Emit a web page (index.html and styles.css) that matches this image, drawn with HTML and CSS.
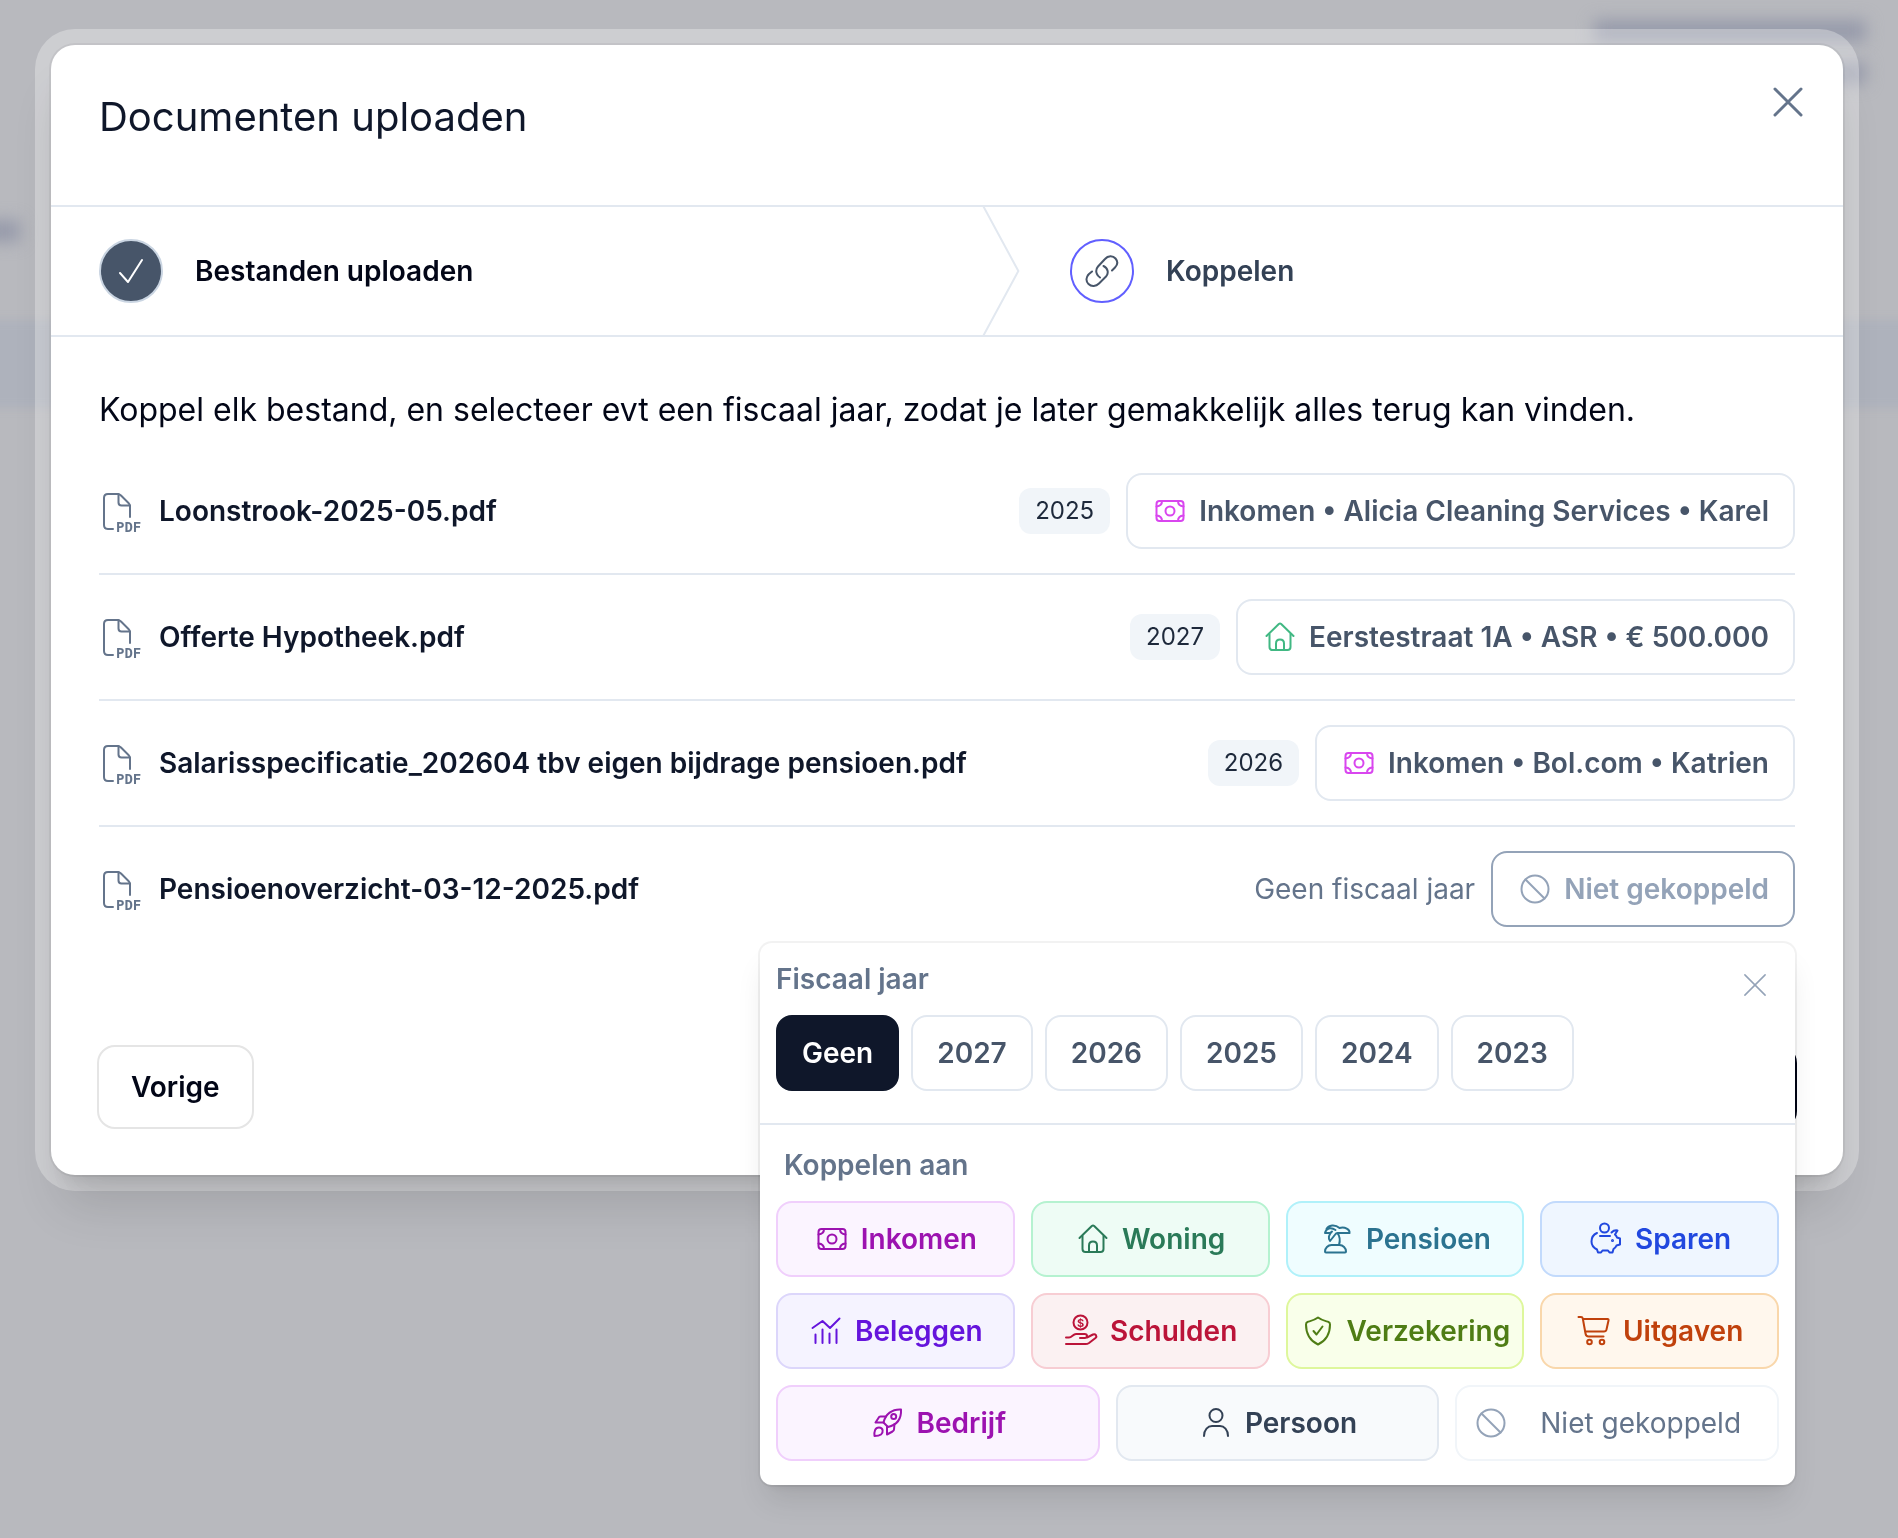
FILE: index.html
```html
<!DOCTYPE html>
<html lang="nl">
<head>
    <meta charset="UTF-8">
    <meta name="viewport" content="width=device-width, initial-scale=1.0">
    <title>Documenten uploaden</title>
    <link rel="stylesheet" href="styles.css">
</head>
<body>
    <svg class="icon-defs" aria-hidden="true">
        <symbol id="icon-close" viewBox="0 0 36 36">
            <path d="M5 5L31 31M31 5L5 31"/>
        </symbol>
        <symbol id="icon-check" viewBox="0 0 36 36">
            <path d="M7 20L15 29L29 7"/>
        </symbol>
        <symbol id="icon-link" viewBox="0 0 36 36">
            <path d="M16 24.500C12 22 11 17 14 13.500L21 6C24 2.500 29 2.500 31.500 5.500C34 8.500 33.500 12 31 14.500L28 17.500"/>
            <path d="M19.500 13C24 15 25 20 22 23.500L15 30.500C12 33.500 7.500 34 4.500 31C1.500 28 2 24 5 21L8 18.500"/>
        </symbol>
        <symbol id="icon-file" viewBox="0 0 44 44">
            <path d="M14 40H9Q5 40 5 36V9Q5 5 9 5H18.500Q20.500 5 22 6.500L29.500 14Q31 15.500 31 17.500V28"/>
            <path d="M19.500 5V13.500Q19.500 16.500 22.500 16.500H31"/>
        </symbol>
        <symbol id="icon-money" viewBox="0 0 36 36">
            <rect x="4.500" y="8" width="27" height="20" rx="3"/>
            <circle cx="18" cy="18" r="4.500"/>
            <path d="M10 8Q10 13 4.500 13.500M26 8Q26 13 31.500 13.500M10 28Q10 23 4.500 22.500M26 28Q26 23 31.500 22.500"/>
        </symbol>
        <symbol id="icon-house" viewBox="0 0 36 36">
            <path d="M4.500 17L16.800 5Q18 4 19.200 5L31.500 17"/>
            <path d="M7.500 15V28Q7.500 31 10.500 31H25.500Q28.500 31 28.500 28V15"/>
            <path d="M14 31V24.500Q14 20.500 18 20.500T22 24.500V31"/>
        </symbol>
        <symbol id="icon-palm" viewBox="0 0 36 36">
            <path d="M7 31.500Q6 31.500 6 30.500C6 27 9 24 12.500 24H20.500C24 24 27 27 27 30.500Q27 31.500 26 31.500Z"/>
            <path d="M20 24C21.500 19 21 15.500 18.500 12"/>
            <path d="M16.500 9C11.500 5.500 7 7.500 6 12H11L13 10.500C9.500 13.500 9 17.500 11 20L17 12.500L19.500 12H30.500C31 8.500 26 5.500 20.500 7C16 3 9.500 4 7.500 8"/>
        </symbol>
        <symbol id="icon-piggy" viewBox="0 0 36 36">
            <circle cx="16.500" cy="7" r="4.500"/>
            <path d="M12 15H22"/>
            <path d="M9 12C5.500 13.500 3.500 17 3.500 20.500C3.500 24.500 6 27 9 28.500L10 31.500H13L14.500 29.500H20L21.500 31.500H24.500L25.500 28C27 27 28 26 28.500 24.500L32 23.500V17.500L29 16.500C28.500 15 28 14.500 27 13.500L29.500 9.500C27 9 25 10 23.500 11.500"/>
            <circle class="dot" cx="24.500" cy="19.500" r="0.500"/>
        </symbol>
        <symbol id="icon-chart" viewBox="0 0 36 36">
            <path d="M4.500 15L14.500 8L22 15L31.500 5.500M7.500 21.500V30M14.500 16.500V30M21.500 20.500V30M28.500 16.500V30"/>
        </symbol>
        <symbol id="icon-shield" viewBox="0 0 36 36">
            <path d="M18 4.500C14 7.500 10.500 8 7.500 9Q6 9.500 6 11.500C6 21 9.500 27.500 18 31.500C26.500 27.500 30 21 30 11.500Q30 9.500 28.500 9C25.500 8 22 7.500 18 4.500Z"/>
            <path d="M13.500 18L16.500 21.500L22.500 13.500"/>
        </symbol>
        <symbol id="icon-cart" viewBox="0 0 36 36">
            <path d="M2.500 4H5Q6.500 4 6.800 5.500L9.500 20.500Q10 23.500 12.500 23.500H27.500M7 6H31.500Q32.800 6 32.500 7.500L30.500 16.500Q30 18.500 28 18.500H9"/>
            <circle cx="13.500" cy="29" r="2.300"/>
            <circle cx="26" cy="29" r="2.300"/>
        </symbol>
        <symbol id="icon-rocket" viewBox="0 0 36 36">
            <path d="M31 4.500C22 4 15.500 9 13.500 17.500L18 22C26.500 20 31.500 14 31 4.500Z"/>
            <circle cx="23.700" cy="11.500" r="2.500"/>
            <path d="M16 11.500H10.500Q9 11.500 8.500 13L5.500 17.500H13.500M17 21.500V29.500L22.500 26.500Q24 25.500 24 24.500L24.500 19M4.500 31C4 26.500 5 22.500 9 22.500C13.500 22.500 13.500 27.500 11 29.500Q9 31 4.500 31Z"/>
        </symbol>
        <symbol id="icon-person" viewBox="0 0 36 36">
            <circle cx="18" cy="10.500" r="6.500"/>
            <path d="M6 31C6 24.500 10 21 14 21H22C26 21 30 24.500 30 31"/>
        </symbol>
        <symbol id="icon-none" viewBox="0 0 36 36">
            <circle cx="18" cy="18" r="13.500"/>
            <path d="M8.500 8.500L27.500 27.500"/>
        </symbol>
    </svg>

    <!-- blurred page behind the dialog -->
    <div class="backdrop" aria-hidden="true">
        <div class="backdrop-head">
            <div class="backdrop-title"></div>
            <div class="backdrop-sub"></div>
        </div>
        <div class="backdrop-nav"></div>
        <div class="backdrop-band"></div>
    </div>

    <div class="modal-frame">
        <div class="modal" role="dialog" aria-labelledby="modalTitle">
            <div class="modal-header">
                <h1 id="modalTitle">Documenten uploaden</h1>
                <button class="modal-close" aria-label="Sluiten"><svg class="icon"><use href="#icon-close"/></svg></button>
            </div>

            <ol class="steps">
                <li class="step">
                    <span class="step-circle done"><svg class="icon"><use href="#icon-check"/></svg></span>
                    <span class="step-name">Bestanden uploaden</span>
                    <svg class="step-arrow" viewBox="0 0 22 80" preserveAspectRatio="none"><path d="M0 -2L20 40L0 82"/></svg>
                </li>
                <li class="step current">
                    <span class="step-circle"><svg class="icon"><use href="#icon-link"/></svg></span>
                    <span class="step-name">Koppelen</span>
                </li>
            </ol>

            <div class="modal-body">
                <p class="intro">Koppel elk bestand, en selecteer evt een fiscaal jaar, zodat je later gemakkelijk alles terug kan vinden.</p>

                <ul class="files">
                    <li class="file">
                        <svg class="file-icon" viewBox="0 0 44 44"><use href="#icon-file"/><text x="17" y="43">PDF</text></svg>
                        <span class="file-name">Loonstrook-2025-05.pdf</span>
                        <span class="year-tag">2025</span>
                        <button class="btn link-btn"><svg class="icon pink"><use href="#icon-money"/></svg>Inkomen • Alicia Cleaning Services • Karel</button>
                    </li>
                    <li class="file">
                        <svg class="file-icon" viewBox="0 0 44 44"><use href="#icon-file"/><text x="17" y="43">PDF</text></svg>
                        <span class="file-name">Offerte Hypotheek.pdf</span>
                        <span class="year-tag">2027</span>
                        <button class="btn link-btn"><svg class="icon green"><use href="#icon-house"/></svg>Eerstestraat 1A • ASR • € 500.000</button>
                    </li>
                    <li class="file">
                        <svg class="file-icon" viewBox="0 0 44 44"><use href="#icon-file"/><text x="17" y="43">PDF</text></svg>
                        <span class="file-name">Salarisspecificatie_202604 tbv eigen bijdrage pensioen.pdf</span>
                        <span class="year-tag">2026</span>
                        <button class="btn link-btn"><svg class="icon pink"><use href="#icon-money"/></svg>Inkomen • Bol.com • Katrien</button>
                    </li>
                    <li class="file">
                        <svg class="file-icon" viewBox="0 0 44 44"><use href="#icon-file"/><text x="17" y="43">PDF</text></svg>
                        <span class="file-name">Pensioenoverzicht-03-12-2025.pdf</span>
                        <span class="no-year">Geen fiscaal jaar</span>
                        <div class="picker">
                            <button class="btn link-btn unlinked" aria-expanded="true"><svg class="icon"><use href="#icon-none"/></svg>Niet gekoppeld</button>
                            <div class="popover">
                                <div class="popover-years">
                                    <h2>Fiscaal jaar</h2>
                                    <button class="popover-close" aria-label="Sluiten"><svg class="icon"><use href="#icon-close"/></svg></button>
                                    <div class="years">
                                        <button class="btn selected">Geen</button>
                                        <button class="btn">2027</button>
                                        <button class="btn">2026</button>
                                        <button class="btn">2025</button>
                                        <button class="btn">2024</button>
                                        <button class="btn">2023</button>
                                    </div>
                                </div>
                                <div class="popover-targets">
                                    <h2>Koppelen aan</h2>
                                    <div class="targets">
                                        <button class="btn target fuchsia"><svg class="icon"><use href="#icon-money"/></svg>Inkomen</button>
                                        <button class="btn target emerald"><svg class="icon"><use href="#icon-house"/></svg>Woning</button>
                                        <button class="btn target cyan"><svg class="icon"><use href="#icon-palm"/></svg>Pensioen</button>
                                        <button class="btn target blue"><svg class="icon"><use href="#icon-piggy"/></svg>Sparen</button>
                                        <button class="btn target violet"><svg class="icon"><use href="#icon-chart"/></svg>Beleggen</button>
                                        <button class="btn target rose">
                                            <svg class="icon" viewBox="0 0 36 36">
                                                <circle cx="17.500" cy="9.500" r="7"/>
                                                <text x="17.500" y="13.500">$</text>
                                                <path d="M3 24.500H6C9 24.500 10 21 13 21H21.500Q24 21 24 23T21.500 25H17M24 24.500L30 21.500C32.500 20.500 34.500 23 32.500 25L26 30Q24.500 31 22.500 31H3"/>
                                            </svg>Schulden</button>
                                        <button class="btn target lime"><svg class="icon"><use href="#icon-shield"/></svg>Verzekering</button>
                                        <button class="btn target orange"><svg class="icon"><use href="#icon-cart"/></svg>Uitgaven</button>
                                    </div>
                                    <div class="targets wide">
                                        <button class="btn target fuchsia"><svg class="icon"><use href="#icon-rocket"/></svg>Bedrijf</button>
                                        <button class="btn target slate"><svg class="icon"><use href="#icon-person"/></svg>Persoon</button>
                                        <button class="btn target none"><svg class="icon"><use href="#icon-none"/></svg><span>Niet gekoppeld</span></button>
                                    </div>
                                </div>
                            </div>
                        </div>
                    </li>
                </ul>

                <div class="modal-footer">
                    <button class="nav-btn">Vorige</button>
                    <button class="nav-btn primary" aria-label="Opslaan"></button>
                </div>
            </div>
        </div>
    </div>
</body>
</html>
```
FILE: styles.css
```css
* {
    box-sizing: border-box;
}
body {
    margin: 0;
    min-height: 100vh;
    background-color: #b8b9be;
    font-family: Inter, "Liberation Sans", sans-serif;
    font-size: 28px;
    line-height: 40px;
    color: #0f172a;
}
button {
    font: inherit;
    color: inherit;
    margin: 0;
    padding: 0;
    border: none;
    background: none;
    cursor: pointer;
}
h1, h2, p, ul, ol {
    margin: 0;
    padding: 0;
}
ul, ol {
    list-style: none;
}
.icon-defs {
    position: absolute;
    width: 0;
    height: 0;
}
.icon {
    width: 36px;
    height: 36px;
    flex: none;
}
.icon, .file-icon {
    display: block;
    fill: none;
    stroke: currentColor;
    stroke-width: 2;
    stroke-linecap: round;
    stroke-linejoin: round;
}
.dot {
    fill: currentColor;
}
.file-icon text {
    font: bold 14px "DejaVu Sans Mono", monospace;
    fill: currentColor;
    stroke: none;
}
.icon text {
    font: bold 11px Inter, sans-serif;
    text-anchor: middle;
    fill: currentColor;
    stroke: none;
}

/* backdrop */
.backdrop {
    position: fixed;
    inset: 0;
    overflow: hidden;
}
.backdrop-head {
    display: flex;
    flex-direction: column;
    align-items: flex-end;
    gap: 20px;
    height: 220px;
    padding: 20px 32px;
}
.backdrop-title, .backdrop-sub, .backdrop-nav {
    height: 22px;
    background-color: #969aaa;
    filter: blur(8px);
}
.backdrop-title {
    width: 272px;
}
.backdrop-sub {
    width: 160px;
}
.backdrop-nav {
    width: 48px;
    margin-left: -28px;
}
.backdrop-band {
    height: 88px;
    margin: 78px -20px 0;
    background-color: #aeb2bc;
    filter: blur(4px);
}

/* modal */
.modal-frame {
    position: relative;
    margin: 29px 39px 29px 35px;
    padding: 16px;
    border-radius: 40px;
    background-color: rgba(255,255,255,0.3);
}
.modal {
    border-radius: 24px;
    background-color: #fff;
    box-shadow: 0 0 0 2px rgba(0,0,0,0.05), 0 40px 50px -10px rgba(0,0,0,0.12), 0 16px 20px -12px rgba(0,0,0,0.12);
}
.modal-header {
    display: flex;
    justify-content: space-between;
    align-items: flex-start;
    height: 162px;
    padding: 39px 37px 0 48px;
    border-bottom: 2px solid #e2e8f0;
}
.modal-header h1 {
    margin-top: 9px;
    font-size: 40px;
    font-weight: 400;
    line-height: 48px;
}
.modal-close {
    color: #64748b;
}
.modal-close .icon {
    stroke-width: 3;
}

/* steps */
.steps {
    display: flex;
    border-bottom: 2px solid #e2e8f0;
}
.step {
    position: relative;
    display: flex;
    flex: 1 1 auto;
    align-items: center;
    gap: 32px;
    padding: 32px 48px;
    font-weight: 600;
    color: #020617;
}
.step.current {
    color: #334155;
}
.step-circle {
    display: flex;
    align-items: center;
    justify-content: center;
    width: 64px;
    height: 64px;
    border: 2px solid #615fff;
    border-radius: 50%;
    color: #475569;
}
.step-circle.done {
    border-color: #cad5e2;
    background-color: #475569;
    color: #fff;
}
.step-arrow {
    position: absolute;
    top: 0;
    right: 0;
    width: 40px;
    height: 100%;
    fill: none;
    stroke: #e2e8f0;
}
.step-arrow path {
    stroke-width: 2;
    vector-effect: non-scaling-stroke;
}

/* files */
.modal-body {
    padding: 48px;
}
.intro {
    padding-top: 1px;
    margin-bottom: 15px;
    font-size: 32px;
    line-height: 48px;
    color: #020617;
}
.file {
    display: flex;
    align-items: center;
    gap: 16px;
    padding: 24px 0;
    border-bottom: 2px solid #e2e8f0;
}
.file:last-child {
    border-bottom: none;
}
.file-icon {
    flex: none;
    width: 44px;
    height: 44px;
    color: #64748b;
}
.file-name {
    flex: 1;
    font-weight: 600;
}
.year-tag {
    padding: 3px 16px;
    border-radius: 12px;
    background-color: #f1f5f9;
    font-size: 24px;
    color: #1e293b;
}
.no-year {
    color: #64748b;
}
.btn {
    display: flex;
    align-items: center;
    justify-content: center;
    gap: 11px;
    height: 76px;
    padding: 0 24px;
    border: 2px solid #e2e8f0;
    border-radius: 16px;
    background-color: #fff;
    font-weight: 600;
    color: #475569;
    white-space: nowrap;
}
.pink {
    color: #d946ef;
}
.green {
    color: #41b883;
}
.btn.unlinked {
    border-color: #94a3b8;
    color: #94a3b8;
}

/* popover */
.picker {
    position: relative;
}
.popover {
    position: absolute;
    top: calc(100% + 16px);
    right: 0;
    z-index: 10;
    width: 1035px;
    border-radius: 12px;
    background-color: #fff;
    box-shadow: 0 0 0 2px rgba(0,0,0,0.05), 0 20px 30px -6px rgba(0,0,0,0.1), 0 8px 12px -8px rgba(0,0,0,0.1);
}
.popover h2 {
    font-size: 28px;
    font-weight: 600;
    line-height: 40px;
    color: #64748b;
}
.popover-years {
    display: grid;
    grid-template-columns: 1fr auto;
    row-gap: 16px;
    padding: 16px 16px 32px;
    border-bottom: 2px solid #e2e8f0;
}
.popover-close {
    padding: 12px 10px 0;
    color: #94a3b8;
}
.popover-close .icon {
    width: 28px;
    height: 28px;
}
.years {
    display: flex;
    grid-column: 1 / -1;
    gap: 12px;
}
.btn.selected {
    border-color: #0f172a;
    background-color: #0f172a;
    color: #fff;
}
.popover-targets {
    padding: 20px 16px 24px;
}
.popover-targets h2 {
    padding-left: 8px;
    margin-bottom: 16px;
}
.targets {
    display: grid;
    grid-template-columns: repeat(4, minmax(0, 1fr));
    gap: 16px;
}
.targets.wide {
    grid-template-columns: repeat(3, minmax(0, 1fr));
    margin-top: 16px;
}
.target {
    padding: 0 12px;
}
.fuchsia {
    border-color: #f0cffc;
    background-color: #fbf4ff;
    color: #9c12b0;
}
.emerald {
    border-color: #b5f2d0;
    background-color: #eefcf5;
    color: #2a7a58;
}
.cyan {
    border-color: #b0f1fa;
    background-color: #effdff;
    color: #2b7390;
}
.blue {
    border-color: #c2dafc;
    background-color: #eff6ff;
    color: #2148df;
}
.violet {
    border-color: #dcd6fb;
    background-color: #f5f3ff;
    color: #6514dc;
}
.rose {
    border-color: #f7cdd3;
    background-color: #fbf1f2;
    color: #bb1439;
}
.lime {
    border-color: #def79c;
    background-color: #f9ffea;
    color: #4f7d15;
}
.orange {
    border-color: #f9d7ab;
    background-color: #fff7ed;
    color: #c0410c;
}
.slate {
    border-color: #e2e8f0;
    background-color: #f8fafc;
    color: #334155;
}
.btn.none {
    padding: 0 16px;
    border-color: #f1f5f9;
    font-weight: 400;
    color: #64748b;
}
.none .icon {
    color: #94a3b8;
}
.none span {
    flex: 1;
}

/* footer */
.modal-footer {
    display: flex;
    justify-content: space-between;
    margin: 94px -2px -2px;
}
.nav-btn {
    height: 84px;
    padding: 0 32px;
    border: 2px solid #e5e5e5;
    border-radius: 18px;
    font-weight: 600;
    color: #020617;
}
.nav-btn.primary {
    width: 180px;
    border-color: #020617;
    background-color: #020617;
}
```
